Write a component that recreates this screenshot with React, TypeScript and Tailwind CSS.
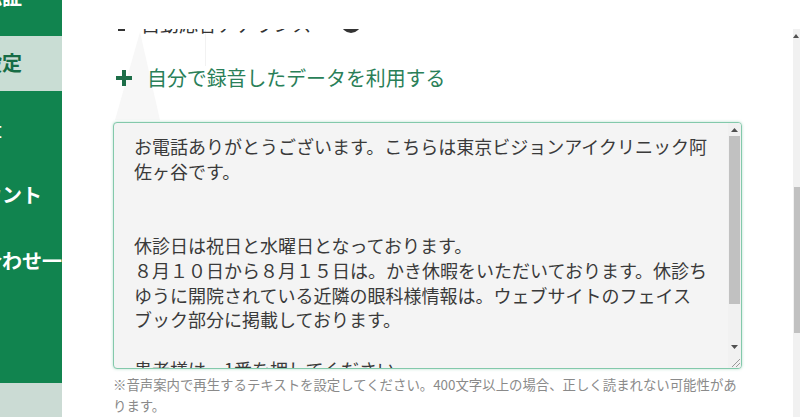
import React from "react";

const FONT = '"Noto Sans CJK JP", "Noto Sans", sans-serif';

const navItems = [
  { label: "電話認証", active: false },
  { label: "応答設定", active: true },
  { label: "利用量", active: false },
  { label: "アカウント", active: false },
  { label: "問い合わせ一覧", active: false },
];

const lines = [
  "お電話ありがとうございます。こちらは東京ビジョンアイクリニック阿",
  "佐ヶ谷です。",
  "",
  "",
  "休診日は祝日と水曜日となっております。",
  "８月１０日から８月１５日は。かき休暇をいただいております。休診ち",
  "ゆうに開院されている近隣の眼科様情報は。ウェブサイトのフェイス",
  "ブック部分に掲載しております。",
  "",
  "患者様は、1番を押してください。",
];

function ArrowUp() {
  return (
    <svg width="7" height="4" viewBox="0 0 7 4">
      <polygon points="3.5,0 7,4 0,4" fill="#505050" />
    </svg>
  );
}
function ArrowDown() {
  return (
    <svg width="7" height="4" viewBox="0 0 7 4">
      <polygon points="0,0 7,0 3.5,4" fill="#505050" />
    </svg>
  );
}

export default function App() {
  return (
    <div
      className="flex h-[417px] w-[800px] overflow-hidden bg-white"
      style={{ fontFamily: FONT }}
    >
      {/* Sidebar */}
      <aside className="flex w-[62px] shrink-0 flex-col overflow-hidden bg-[#11844f]">
        <div className="-mt-[36px] flex flex-col">
          {navItems.map((it) => (
            <div key={it.label} className="flex h-[66px] items-center">
              <div
                className={
                  "flex h-[55px] w-full items-center overflow-hidden " +
                  (it.active ? "bg-[#c9ddd4] text-[#176c45]" : "text-white")
                }
              >
                <span className="-ml-[58px] whitespace-nowrap text-[20px] font-bold leading-none">
                  {it.label}
                </span>
              </div>
            </div>
          ))}
        </div>
        <div className="flex-1" />
        <div className="h-[34px] bg-[#cbdbd4]" />
      </aside>

      {/* Main */}
      <main className="flex min-w-0 flex-1 flex-col">
        <div className="h-[29px] shrink-0 bg-white" />
        <div className="flex min-h-0 flex-1">
          <div className="relative min-w-0 flex-1 overflow-hidden pl-[51px]">
            {/* faint decorative shapes */}
            <svg
              className="absolute left-[53px] top-[3px]"
              width="45"
              height="88"
              viewBox="0 0 45 88"
            >
              <polygon points="25,0 0,88 45,88" fill="#f7f7f7" />
            </svg>
            <div className="absolute left-[143px] top-[1px] h-[36px] w-px bg-[#f2f2f2]" />

            <div className="relative">
              {/* heading (scrolled mostly out of view) */}
              <div className="-mt-[21px] flex h-[30px] items-center text-[19px] text-[#333]">
                <svg width="10" height="20" viewBox="0 0 10 20" className="ml-[4px]">
                  <path d="M5 2 V16" stroke="#333" strokeWidth="2" />
                  <path d="M1 17 H8" stroke="#333" strokeWidth="2" />
                </svg>
                <span className="ml-[14px] whitespace-nowrap leading-none">自動応答アナウンス</span>
                <span className="ml-[30px] flex h-[20px] w-[20px] items-center justify-center rounded-full bg-[#333] text-[13px] font-bold text-white">
                  ?
                </span>
              </div>

              {/* add own recording */}
              <div className="mt-[25px] flex h-[30px] items-center">
                <svg width="16" height="16" viewBox="0 0 16 16" className="ml-[3px]">
                  <rect x="6" y="0" width="4" height="16" fill="#1d6e48" />
                  <rect x="0" y="6" width="16" height="4" fill="#1d6e48" />
                </svg>
                <span className="ml-[15px] whitespace-nowrap text-[19.9px] leading-none text-[#2a7f58]">
                  自分で録音したデータを利用する
                </span>
              </div>

              {/* textarea */}
              <div className="mt-[29px] flex h-[247px] w-[629px] overflow-hidden rounded-[4px] border-[1.5px] border-[#83c9ab] bg-[#f4f4f4] shadow-[0_0_3px_rgba(90,180,140,0.45)]">
                <div className="min-w-0 flex-1 overflow-hidden pl-[20px] pt-[11px] text-[18px] leading-[24.75px] text-[#3a3a3a]">
                  {lines.map((l, i) => (
                    <div key={i} className="h-[24.75px] whitespace-pre">
                      {l}
                    </div>
                  ))}
                </div>
                <div className="flex w-[13px] shrink-0 flex-col bg-[#f1f1f1]">
                  <div className="flex h-[13px] items-center justify-center">
                    <ArrowUp />
                  </div>
                  <div className="flex-1">
                    <div className="mx-auto h-[168px] w-[11px] bg-[#c1c1c1]" />
                  </div>
                  <div className="flex h-[13px] items-center justify-center">
                    <ArrowDown />
                  </div>
                  <div className="flex h-[15px] items-end justify-end">
                    <svg width="12" height="12" viewBox="0 0 12 12">
                      <path d="M11 3 L3 11 M11 7 L7 11" stroke="#9a9a9a" strokeWidth="1" />
                    </svg>
                  </div>
                </div>
              </div>

              {/* help text */}
              <div className="mt-[5px] text-[13.4px] leading-[21px] text-[#8a8a8a]">
                <div className="whitespace-nowrap">
                  ※音声案内で再生するテキストを設定してください。400文字以上の場合、正しく読まれない可能性があ
                </div>
                <div className="whitespace-nowrap">ります。</div>
              </div>
            </div>
          </div>

          {/* page scrollbar (partially visible) */}
          <div className="flex w-[7px] shrink-0 flex-col bg-[#f1f1f1]">
            <div className="flex h-[14px] items-center justify-start">
              <svg width="6" height="4" viewBox="0 0 6 4">
                <polygon points="3,0 6,4 0,4" fill="#505050" />
              </svg>
            </div>
            <div className="mt-[144px] ml-[1px] h-[146px] bg-[#c1c1c1]" />
          </div>
        </div>
      </main>
    </div>
  );
}
